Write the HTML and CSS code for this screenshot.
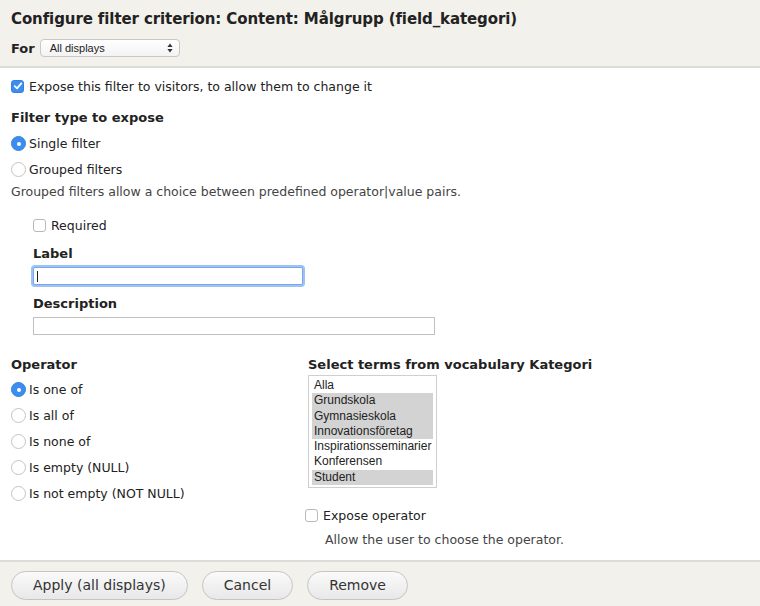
FILE: index.html
```html
<!DOCTYPE html>
<html>
<head>
<meta charset="utf-8">
<link rel="stylesheet" href="styles.css">
</head>
<body>
<div class="dialog">
  <div class="header">
    <h1 class="title">Configure filter criterion: Content: Målgrupp (field_kategori)</h1>
    <div class="for-row">
      <span class="for-label">For</span>
      <div class="fake-select"><span>All displays</span><span class="arrows"><svg width="6" height="10" viewBox="0 0 6 10"><path d="M3 0.5 L5.6 4 H0.4 Z M3 9.5 L5.6 6 H0.4 Z" fill="#333"/></svg></span></div>
    </div>
  </div>
  <div class="body">
    <label class="check-row expose">
      <span class="cb checked"><svg width="10" height="10" viewBox="0 0 10 10"><path d="M1.8 5.2 L4 7.4 L8.3 2.4" fill="none" stroke="#fff" stroke-width="1.8" stroke-linecap="round" stroke-linejoin="round"/></svg></span>
      <span>Expose this filter to visitors, to allow them to change it</span>
    </label>

    <div class="section-title ftype">Filter type to expose</div>
    <div class="radio-row"><span class="rb on"></span><span>Single filter</span></div>
    <div class="radio-row"><span class="rb"></span><span>Grouped filters</span></div>
    <div class="desc grouped-desc">Grouped filters allow a choice between predefined operator|value pairs.</div>

    <div class="indent">
      <div class="check-row required"><span class="cb"></span><span>Required</span></div>
      <div class="section-title field-title label-title">Label</div>
      <div class="text-input focused"><span class="caret"></span></div>
      <div class="section-title field-title desc-title">Description</div>
      <div class="text-input wide"></div>
    </div>

    <div class="columns">
      <div class="col-left">
        <div class="section-title">Operator</div>
        <div class="radio-row op"><span class="rb on"></span><span>Is one of</span></div>
        <div class="radio-row op"><span class="rb"></span><span>Is all of</span></div>
        <div class="radio-row op"><span class="rb"></span><span>Is none of</span></div>
        <div class="radio-row op"><span class="rb"></span><span>Is empty (NULL)</span></div>
        <div class="radio-row op"><span class="rb"></span><span>Is not empty (NOT NULL)</span></div>
      </div>
      <div class="col-right">
        <div class="section-title">Select terms from vocabulary Kategori</div>
        <div class="listbox">
          <div class="opt">Alla</div>
          <div class="opt sel">Grundskola</div>
          <div class="opt sel">Gymnasieskola</div>
          <div class="opt sel">Innovationsföretag</div>
          <div class="opt">Inspirationsseminarier</div>
          <div class="opt">Konferensen</div>
          <div class="opt sel">Student</div>
        </div>
        <div class="check-row expose-op"><span class="cb"></span><span>Expose operator</span></div>
        <div class="desc op-desc">Allow the user to choose the operator.</div>
      </div>
    </div>
  </div>
  <div class="footer">
    <button class="btn">Apply (all displays)</button>
    <button class="btn">Cancel</button>
    <button class="btn">Remove</button>
  </div>
</div>
</body>
</html>
```
FILE: styles.css
```css
html, body {
  margin: 0;
  padding: 0;
  background: #fff;
}
body {
  font-family: "DejaVu Sans", Verdana, sans-serif;
  font-size: 12.5px;
  color: #222;
  width: 760px;
  height: 606px;
  overflow: hidden;
}
.dialog {
  display: flex;
  flex-direction: column;
  height: 606px;
}
.header {
  background: #f2f1eb;
  border-bottom: 2px solid #dcdcd8;
  padding: 9px 11px 0;
  height: 57px;
}
.title {
  margin: 0;
  font-size: 15px;
  font-weight: bold;
  color: #222;
  line-height: 20px;
  letter-spacing: -0.1px;
}
.for-row {
  display: flex;
  align-items: center;
  margin-top: 10px;
  gap: 5px;
}
.for-label {
  font-weight: bold;
  font-size: 13px;
}
.fake-select {
  height: 16px;
  border: 1px solid #c8c8c8;
  border-radius: 4px;
  background: linear-gradient(#fff, #f3f3f3);
  display: flex;
  align-items: center;
  justify-content: space-between;
  padding: 0 6px 0 9px;
  box-sizing: content-box;
  width: 123px;
  font-family: "Liberation Sans", Arial, sans-serif;
  font-size: 11px;
  color: #222;
}
.arrows { display: flex; align-items: center; }
.body {
  flex: 1;
  padding: 0 11px;
}
.check-row {
  display: flex;
  align-items: center;
  gap: 5px;
}
.cb {
  width: 11px;
  height: 11px;
  border: 1px solid #b9b9b9;
  border-radius: 3px;
  background: #fff;
  display: inline-flex;
  align-items: center;
  justify-content: center;
  flex: none;
}
.cb.checked {
  background: #3b8ef0;
  border-color: #3581e0;
}
.expose {
  margin-top: 10px;
  height: 16px;
}
.section-title {
  font-weight: bold;
  font-size: 13px;
  line-height: 18px;
}
.ftype { margin-top: 15px; }
.radio-row {
  display: flex;
  align-items: center;
  gap: 3px;
  height: 18px;
  margin-top: 8px;
}
.ftype + .radio-row { margin-top: 7px; }
.rb {
  width: 13px;
  height: 13px;
  border: 1px solid #c4c4c4;
  border-radius: 50%;
  background: #fff;
  flex: none;
  box-sizing: content-box;
  position: relative;
}
.rb.on {
  background: #3b8ef0;
  border-color: #3581e0;
}
.rb.on::after {
  content: "";
  position: absolute;
  left: 5px;
  top: 5px;
  width: 4px;
  height: 4px;
  border-radius: 50%;
  background: #fff;
}
.desc {
  color: #444;
}
.grouped-desc { margin-top: 6px; line-height: 16px; }
.indent {
  padding-left: 22px;
}
.required { margin-top: 17px; height: 16px; }
.label-title { margin-top: 12px; }
.desc-title { margin-top: 10px; }
.text-input {
  height: 16px;
  border: 1px solid #c0c0c0;
  background: #fff;
  margin-top: 4px;
  box-sizing: content-box;
}
.text-input.focused {
  border: 1px solid #7aa7e6;
  border-radius: 2px;
  box-shadow: 0 0 0 2px #9cc3f5;
  display: flex;
  align-items: center;
  padding-left: 3px;
  width: 265px;
}
.caret {
  width: 1px;
  height: 11px;
  background: #222;
}
.text-input.wide { width: 400px; }
.columns {
  display: flex;
  margin-top: 21px;
}
.col-left { width: 297px; }
.col-right { flex: 1; }
.radio-row.op { margin-top: 8px; }
.col-left .section-title + .radio-row { margin-top: 6px; }
.listbox {
  margin-top: 1px;
  width: 121px;
  border: 1px solid #cfcfcf;
  padding: 2px 3px;
  font-family: "Liberation Sans", Arial, sans-serif;
  font-size: 12px;
  color: #222;
}
.opt {
  height: 15.3px;
  line-height: 15px;
  padding-left: 2px;
}
.opt.sel { background: #d3d3d3; }
.expose-op { margin-top: 19px; margin-left: -3px; height: 16px; }
.op-desc { margin-top: 9px; margin-left: 17px; }
.footer {
  background: #f2f1eb;
  border-top: 2px solid #dcdcd8;
  height: 44px;
  display: flex;
  align-items: center;
  padding: 0 11px;
  gap: 14px;
}
.btn {
  font-family: "DejaVu Sans", Verdana, sans-serif;
  font-size: 14px;
  color: #333;
  height: 29px;
  border: 1px solid #c4c4c4;
  border-radius: 15px;
  background: linear-gradient(#fafafa, #e8e8e8);
  padding: 0 21px;
  margin-top: 2px;
}
```
